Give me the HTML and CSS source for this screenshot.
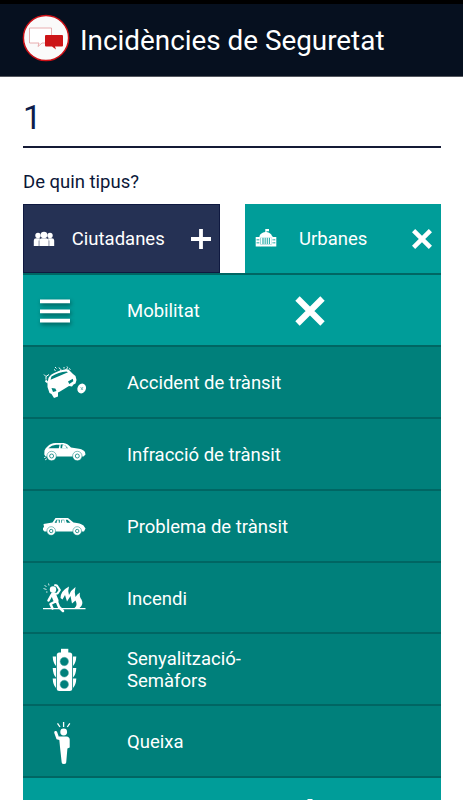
FILE: index.html
```html
<!DOCTYPE html>
<html lang="ca">
<head>
  <meta charset="UTF-8">
  <meta name="viewport" content="width=device-width, initial-scale=1.0">
  <title>Incidències de Seguretat</title>
  <link rel="stylesheet" href="styles.css">
</head>
<body>
  <header class="header">
    <svg class="logo" viewBox="0 0 48 48">
      <circle cx="24" cy="24" r="22.6" fill="#fafafa" stroke="#cc1016" stroke-width="1.5"/>
      <path d="M7.500 14h22v15H20l-4 3.500 1-3.500H7.500z" fill="#fff" stroke="#e29a9c" stroke-width=".8"/>
      <path d="M24 21h16q1 0 1 1v9.500q0 1-1 1h-7l1 3-4-3h-6q-1 0-1-1V22q0-1 1-1z" fill="#cc1417"/>
    </svg>
    <h1>Incidències de Seguretat</h1>
  </header>

  <main class="content">
    <div class="field">1</div>
    <p class="question">De quin tipus?</p>

    <div class="tabs">
      <button class="tab tab-citizen">
        <svg class="tab-icon" viewBox="0 0 22 22" fill="#fff">
          <circle cx="5" cy="7.500" r="2.700"/>
          <circle cx="17" cy="7.500" r="2.700"/>
          <path d="M.8 18v-5.500q0-2.300 2.500-2.300h3.500V18zM15.200 18v-7.800h3.500q2.500 0 2.500 2.300V18z"/>
          <circle cx="11" cy="7" r="3.300"/>
          <path d="M6.400 18v-5q0-2.800 2.600-2.800h4q2.600 0 2.600 2.800v5z"/>
          <path d="M6 18v-5.500M16 18v-5.500" stroke="#253154" stroke-width=".5"/>
        </svg>
        <span class="tab-label">Ciutadanes</span>
        <svg class="tab-sign" viewBox="0 0 22 22" stroke="#fff" stroke-width="3.800">
          <path d="M11 1v20M1 11h20"/>
        </svg>
      </button>
      <button class="tab tab-urban">
        <svg class="tab-icon" viewBox="0 0 22 22" fill="#fff">
          <path d="M10.300 1H14v2.300h-2.500V4q4.500.8 5.500 4H4.500Q5.500 4.800 10.300 4zM4.500 8h13v1.800h-13z"/>
          <path d="M5.500 9.500h2V16h-2zM8.500 9.500h1.200V16H8.500zM10.600 9.500h1.200V16h-1.200zM12.700 9.500h1.200V16h-1.200zM14.800 9.500h2V16h-2zM5 16.200h12V18.500H5z"/>
          <path fill-rule="evenodd" d="M.7 9h4.500v9.500H.7zm1 2v1.500h.9V11zm1.700 0v1.500h.8V11zm-1.700 3v1.500h.9V14zm1.700 0v1.500h.8V14zM16.800 9h4.500v9.500h-4.500zm.9 2v1.500h.8V11zm1.700 0v1.500h.8V11zm-1.700 3v1.500h.8V14zm1.700 0v1.500h.8V14z"/>
        </svg>
        <span class="tab-label">Urbanes</span>
        <svg class="tab-sign" viewBox="0 0 22 22" stroke="#fff" stroke-width="4.500">
          <path d="M2.600 2.600l16.800 16.800M19.400 2.600L2.600 19.400"/>
        </svg>
      </button>
    </div>

    <ul class="list">
      <li class="row row-group">
        <svg class="row-icon menu-icon" viewBox="0 0 60 60" fill="#fff">
          <path d="M5 18.500h30v3.700H5zM5 28.500h30v3.700H5zM5 37.700h30v3.700H5z"/>
        </svg>
        <span class="row-label">Mobilitat</span>
        <svg class="row-sign" viewBox="0 0 30 30" stroke="#fff" stroke-width="6.200">
          <path d="M2.500 2.500l25 25M27.500 2.500l-25 25"/>
        </svg>
      </li>
      <li class="row">
        <svg class="row-icon" viewBox="0 -3.500 60 60" fill="#fff">
          <path fill-rule="evenodd" d="M12.500 26.500l1-5q2-4 8-6 8-3.500 12-2.500l4.500 4.500 2.500 2 1 4-1 3.500-2 1-1.500 2-3-.5-9 5.500-2 1v4l-4 1.500-2.500-4-2-1-2-6zM15.500 23.300l14-6 3.500-1.500-1.500-.8q-8 .3-15 5zM16.500 31.500l1.500 4 3.500-1-1.200-2.600zM33 25l1.300 2.600 4-2.800-.5-2.600z"/>
          <path d="M13 25l-2-2-1 2 2.500 2z"/>
          <ellipse cx="46.700" cy="32" rx="4.200" ry="5" transform="rotate(25 46.700 32)"/>
          <path d="M45.500 30.500l2.500 3M48 30.500l-2 3" stroke="#00807b" stroke-width=".5"/>
          <path d="M9 18l2 2 3-2M11 20v3M19 13l1.500 1M20 10.500l1.500 1.500M24 11l1.500 2M25 14l1.500-.7M29 10.500V12M30.500 13l2-1M32 10l.8 1.300M34 12l1.500 1" fill="none" stroke="#fff" stroke-width="1"/>
        </svg>
        <span class="row-label">Accident de trànsit</span>
      </li>
      <li class="row">
        <svg class="row-icon" viewBox="0 -6 60 60" fill="#fff">
          <path fill-rule="evenodd" d="M9.500 19.500q1-2.500 3-4 3-3.500 8-3.500h8q4 .3 7.500 4.500l8 1.300q5 1 6 3.500l.5 2.200-2 2h-38l-1.200-2zM13.300 17.200h10.500l.8-3.500h-3.500q-4.500.2-7.800 3.500zM25.700 13.500l-.2 3.700h7.500q-2.500-3.400-5.500-3.700z"/>
          <path d="M27.500 14.300q2-1 3 .8l1.500 2.400h-5z"/>
          <circle cx="16.600" cy="25" r="4.700" stroke="#00807b" stroke-width=".5"/>
          <circle cx="42.300" cy="25" r="4.700" stroke="#00807b" stroke-width=".5"/>
          <g fill="none" stroke="#00807b" stroke-width=".8"><circle cx="16.600" cy="25" r="2"/><circle cx="42.300" cy="25" r="2"/></g>
          <path d="M9 26.500h1.500M10 29l1-.7M12 28h-1" stroke="#fff" stroke-width=".8"/>
        </svg>
        <span class="row-label">Infracció de trànsit</span>
      </li>
      <li class="row">
        <svg class="row-icon" viewBox="0 -9.500 60 60" fill="#fff">
          <path fill-rule="evenodd" d="M8.500 17.500l9-1.500 3-4.500h12.500l5.500 4.500q7 .7 10 3l2 3-1.500 3H9.500L8 23.500v-2l1-1zM19.600 16.300h5.200v-3h-3.500zM26.300 13.300v3h3v-3zM30.800 13.300l1 3h3.700l-3-3z"/>
          <path d="M21.800 13.800h2v2.600h-2zM27 13.800h2.200v2.600H27z"/>
          <circle cx="16.200" cy="24.500" r="4.300" stroke="#00807b" stroke-width=".5"/>
          <circle cx="42.200" cy="24.500" r="4.300" stroke="#00807b" stroke-width=".5"/>
          <g fill="none" stroke="#00807b" stroke-width=".8"><circle cx="16.200" cy="24.500" r="1.700"/><circle cx="42.200" cy="24.500" r="1.700"/></g>
        </svg>
        <span class="row-label">Problema de trànsit</span>
      </li>
      <li class="row">
        <svg class="row-icon" viewBox="0 -5 60 60" fill="#fff">
          <circle cx="18" cy="15.500" r="3.200"/>
          <path d="M17.500 20l5-.5 2.300-3.500-3-4.500-2.500-.5" fill="none" stroke="#fff" stroke-width="2.200" stroke-linejoin="round"/>
          <path d="M18.500 20.500l2.500 6" stroke="#fff" stroke-width="5" stroke-linecap="round"/>
          <path d="M16.500 21l-3 5.500M20.500 27.500L15.500 30l2 4.500M22 28l2 5 4 4" fill="none" stroke="#fff" stroke-width="2.500" stroke-linecap="round" stroke-linejoin="round"/>
          <path d="M8 34.600h42.500" stroke="#fff" stroke-width="1.200"/>
          <path d="M25.500 24q0-7 8.500-11.500-1.500 4.500 0 8.500 2-5 6.500-8-1.500 5 0 10 1.500-3 4.500-4.500-1 4 1.500 7 2.500 5-2 8.500h-5q3.500-2.500 1-7.500l-3.500 3-1.500-7.500-3.500 5.500-2-6.500-2.500 4.500z"/>
          <path d="M8.500 14.500l3 1M9.500 11l2 2M13.500 9.500l.5 2M11 18h1.500" stroke="#fff" stroke-width=".8"/>
        </svg>
        <span class="row-label">Incendi</span>
      </li>
      <li class="row">
        <svg class="row-icon" viewBox="-5 -.5 60 60" fill="#fff">
          <path d="M21 8.300h7.300V13H21z"/>
          <rect x="16.800" y="12" width="15.400" height="38.500" rx="2.500"/>
          <path d="M16 16v9.500q-3-3-3.300-9.500zM16 27.500V37q-3-3-3.300-9.500zM16 38v9.500q-3-3-3.300-9.500zM33 16v9.500q3-3 3.300-9.500zM33 27.500V37q3-3 3.300-9.500zM33 38v9.500q3-3 3.300-9.500z"/>
          <g fill="#00807b" stroke="#5baaa6" stroke-width=".5">
            <circle cx="24.300" cy="21" r="4.200"/>
            <circle cx="24.300" cy="32.400" r="4.200"/>
            <circle cx="24.300" cy="43.900" r="4.200"/>
          </g>
        </svg>
        <span class="row-label">Senyalització-<br>Semàfors</span>
      </li>
      <li class="row">
        <svg class="row-icon" viewBox="-5 1 60 60" fill="#fff">
          <circle cx="23.700" cy="21" r="3.400"/>
          <path d="M15.700 21.500l2 5.500 4 1" fill="none" stroke="#fff" stroke-width="3" stroke-linecap="round"/>
          <path d="M19 25.500h7.500q3 .3 3.200 3v8l-2.300 1-1.200 14q-.2 1.500-2.300 1.500-2 0-2.200-1.500L20 36z"/>
          <path d="M17.500 12.300l2.500 3.700M23.600 11v5M29.800 12.300L27.300 16" stroke="#fff" stroke-width="1.300"/>
        </svg>
        <span class="row-label">Queixa</span>
      </li>
      <li class="row row-group">
        <svg class="row-icon" viewBox="0 0 60 60"></svg>
        <span class="row-label"></span>
        <svg class="row-sign" viewBox="0 0 30 30" stroke="#fff" stroke-width="5">
          <path d="M15 0v30M0 15h30"/>
        </svg>
      </li>
    </ul>
  </main>
</body>
</html>
```

FILE: styles.css
```css
* {
  box-sizing: border-box;
}
body {
  margin: 0;
  height: 800px;
  overflow: hidden;
  font-family: Roboto, sans-serif;
  background-color: #fff;
  color: #0b1738;
}
.header {
  display: flex;
  align-items: center;
  gap: 10px;
  height: 77px;
  padding: 0 22px 4px;
  border-top: 4px solid #000;
  border-bottom: 1px solid #54575e;
  background-color: #06101f;
}
.logo {
  width: 48px;
  height: 48px;
}
h1 {
  margin: 5px 0 0;
  font-size: 27.85px;
  font-weight: 400;
  line-height: 34px;
  color: #fff;
  white-space: nowrap;
}
.content {
  padding: 0 22px 0 23px;
}
.field {
  height: 71px;
  padding-top: 20px;
  border-bottom: 2px solid #141a35;
  font-size: 33px;
  line-height: 42px;
  color: #0d1d4b;
}
.question {
  margin: 23px 0 10px;
  font-size: 18.5px;
  line-height: 23px;
}
.tabs {
  display: flex;
  justify-content: space-between;
}
.tab {
  display: flex;
  align-items: center;
  width: 196.5px;
  height: 69px;
  padding: 0 8px 0 10px;
  border: 0;
  font-family: inherit;
  font-size: 18.5px;
  color: #fff;
}
.tab-citizen {
  background-color: #253154;
  box-shadow: inset 0 0 0 1px #0f1940;
}
.tab-urban {
  background-color: #009d99;
}
.tab-icon,
.tab-sign {
  flex: none;
  width: 22px;
  height: 22px;
}
.tab-label {
  flex: 1;
  margin-right: 8px;
  text-align: center;
}
.tab-urban .tab-label {
  margin-right: 21px;
}
.list {
  margin: 0;
  padding: 0;
  list-style: none;
}
.row {
  display: flex;
  align-items: center;
  height: 71.9px;
  padding: 2px 0 0 12px;
  border-top: 2px solid #006663;
  background-color: #00807b;
  color: #fff;
  font-size: 18.5px;
  line-height: 22px;
}
.row-group {
  background-color: #009d99;
}
.row-icon {
  flex: none;
  width: 60px;
  height: 60px;
}
.menu-icon {
  filter: drop-shadow(1px 2px 2px rgba(0, 0, 0, 0.45));
}
.row-label {
  width: 167.5px;
  margin-left: 32px;
}
.row-sign {
  flex: none;
  width: 30px;
  height: 30px;
}
```
